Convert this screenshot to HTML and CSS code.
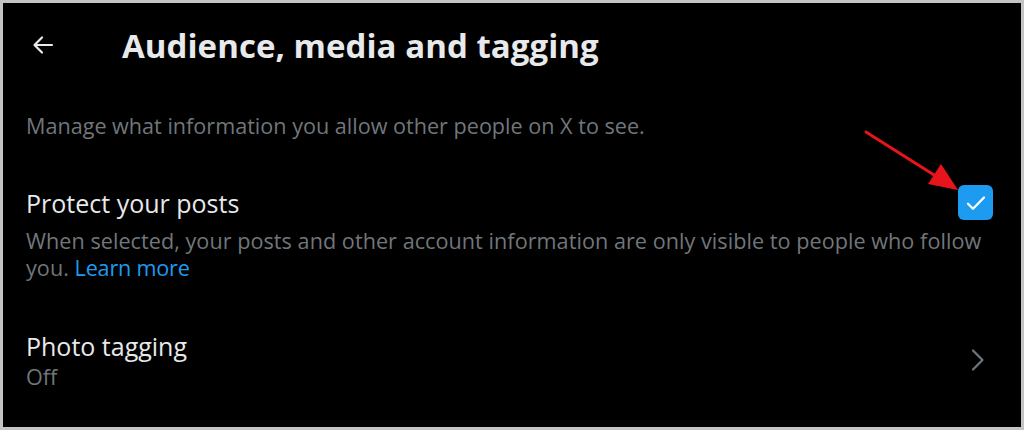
FILE: index.html
```html
<!DOCTYPE html>
<html lang="en">

<head>
	<meta name="viewport" content="width=device-width, initial-scale=1">
	<title>Audience, media and tagging</title>
	<link rel="stylesheet" href="styles.css">
</head>

<body>
	<div class="frame">
		<div class="header">
			<svg class="back" viewBox="0 0 24 24" width="24" height="24">
				<path d="M21 12H4M11 4.5 3.5 12 11 19.5" fill="none" stroke="#e7e9ea" stroke-width="2.2"
					stroke-linecap="round" stroke-linejoin="round" />
			</svg>
			<h1>Audience, media and tagging</h1>
		</div>
		<p class="intro">Manage what information you allow other people on X to see.</p>

		<div class="setting">
			<div class="setting-row">
				<div class="setting-title">Protect your posts</div>
				<div class="checkbox">
					<svg viewBox="0 0 24 24" width="24" height="24">
						<path d="M4 12.8l5 5L20 6.5" fill="none" stroke="#fff" stroke-width="2.3"
							stroke-linecap="round" stroke-linejoin="round" />
					</svg>
				</div>
			</div>
			<div class="setting-desc">When selected, your posts and other account information are only visible to people who follow
				you. <a href="#">Learn more</a></div>
		</div>

		<div class="link-row">
			<div>
				<div class="setting-title">Photo tagging</div>
				<div class="setting-value">Off</div>
			</div>
			<svg class="chevron" viewBox="0 0 14 24" width="14" height="24">
				<path d="M2 2.5 11.5 12 2 21.5" fill="none" stroke="#71767b" stroke-width="2.2" stroke-linecap="round"
					stroke-linejoin="round" />
			</svg>
		</div>

		<!-- annotation arrow -->
		<svg class="pointer" viewBox="0 0 100 64" width="100" height="64">
			<line x1="2" y1="2" x2="78" y2="50" stroke="#e8141c" stroke-width="3" stroke-linecap="round" />
			<polygon points="94,60 64,54 77,34" fill="#e8141c" />
		</svg>
	</div>
</body>

</html>
```

FILE: styles.css
```css
html,
body {
	margin: 0;
	padding: 0;
}

body {
	background: #c4c4c4;
	font-family: "Open Sans", "Liberation Sans", sans-serif;
	color: #e7e9ea;
}

.frame {
	position: relative;
	box-sizing: border-box;
	margin: 3px;
	height: 424px;
	background: #000;
	padding: 0 28px 0 23px;
}

.header {
	display: flex;
	align-items: center;
	height: 84px;
	padding-left: 5px;
	gap: 67px;
}

.back {
	flex: none;
}

h1 {
	margin: 0;
	font-size: 33px;
	font-weight: 700;
	letter-spacing: 0.05px;
	color: #e7e9ea;
}

.intro {
	margin: 25px 0 0 0;
	font-size: 21.6px;
	line-height: 28px;
	color: #71767b;
}

.setting {
	margin-top: 48px;
}

.setting-row {
	display: flex;
	align-items: center;
	justify-content: space-between;
	height: 30px;
}

.setting-title {
	font-size: 25px;
	line-height: 30px;
	color: #e7e9ea;
}

.checkbox {
	display: flex;
	align-items: center;
	justify-content: center;
	width: 35px;
	height: 35px;
	margin-bottom: 1px;
	border-radius: 6px;
	background: #1d9bf0;
}

.setting-desc {
	margin-top: 9px;
	font-size: 21.6px;
	letter-spacing: 0.05px;
	line-height: 27px;
	color: #71767b;
}

.setting-desc a {
	color: #1d9bf0;
	letter-spacing: -0.2px;
	text-decoration: none;
}

.link-row {
	display: flex;
	align-items: center;
	justify-content: space-between;
	margin-top: 50px;
}

.setting-value {
	font-size: 21.6px;
	line-height: 31px;
	color: #71767b;
}

.chevron {
	margin: 0 8px 4px 0;
}

.pointer {
	position: absolute;
	left: 861px;
	top: 127px;
}
```
